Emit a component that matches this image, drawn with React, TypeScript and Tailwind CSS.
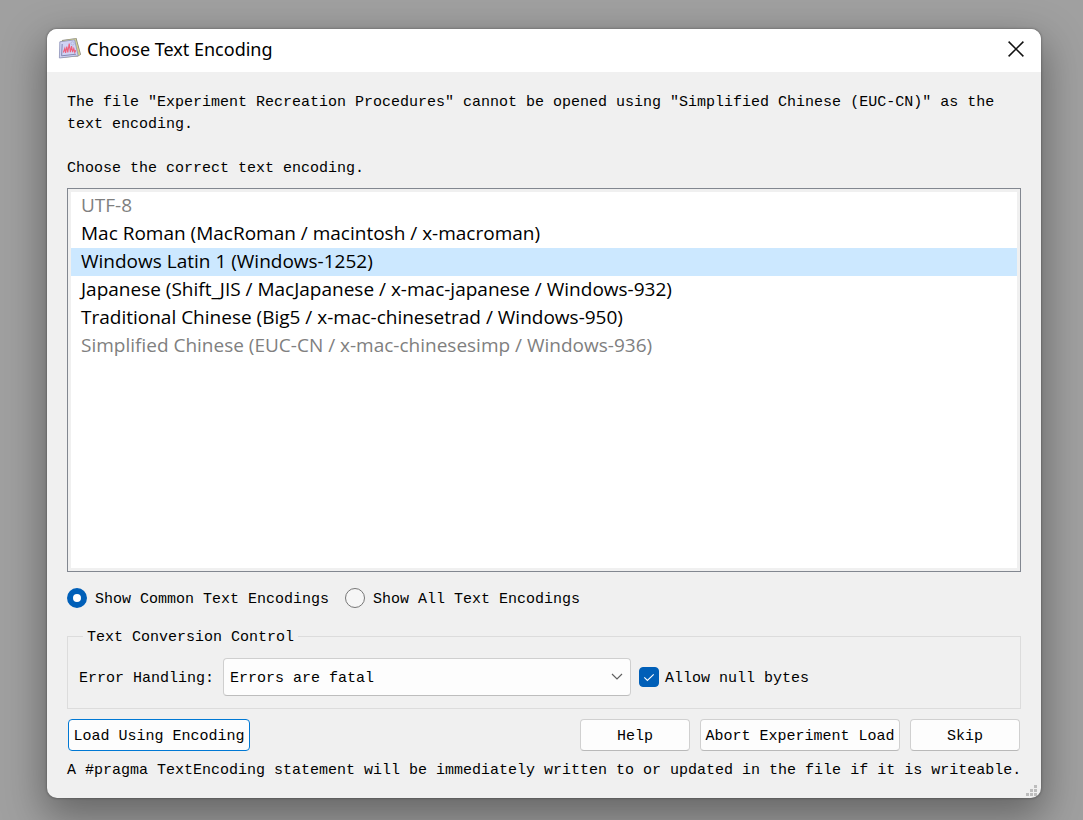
import { useState } from "react";

type Encoding = { name: string; disabled?: boolean };

const encodings: Encoding[] = [
  { name: "UTF-8", disabled: true },
  { name: "Mac Roman (MacRoman / macintosh / x-macroman)" },
  { name: "Windows Latin 1 (Windows-1252)" },
  { name: "Japanese (Shift_JIS / MacJapanese / x-mac-japanese / Windows-932)" },
  { name: "Traditional Chinese (Big5 / x-mac-chinesetrad / Windows-950)" },
  { name: "Simplified Chinese (EUC-CN / x-mac-chinesesimp / Windows-936)", disabled: true },
];

function AppIcon() {
  return (
    <svg width="24" height="24" viewBox="0 0 24 24" aria-hidden="true">
      <path d="M4 3 L18.5 1 L23 17.5 L20 19.5 L4 20.5 Z" fill="#85847c" />
      <path d="M2.5 4 L17.8 1.6 L22.3 17.5 L19 19.5 L3 21 Z" fill="#d2d08c" />
      <path d="M1.8 4.8 L16.6 2.8 L20.2 18.8 L1.4 21 Z" fill="#d0d3f4" stroke="#8b90b6" strokeWidth="0.8" />
      <path d="M4.2 7 L3.6 18.8 L18 17.2" stroke="#7980ac" strokeWidth="0.9" fill="none" />
      <circle cx="14.6" cy="6.4" r="1.7" fill="none" stroke="#a9aed8" strokeWidth="0.8" />
      <path
        d="M5.4 15.5 L6.8 11.5 L7.6 15.8 L8.8 9.5 L9.8 15.4 L11.2 6.5 L12.4 15.2 L13.6 9.2 L14.6 15.2 L15.8 11.4 L16.8 15.4 L17.8 13.2"
        fill="none"
        stroke="#ee5f7a"
        strokeWidth="1.1"
      />
    </svg>
  );
}

function Grip() {
  return (
    <svg className="absolute right-1 bottom-0.5" width="11" height="11" viewBox="0 0 11 11" fill="#bdbdbd" aria-hidden="true">
      <path d="M8 0h3v3h-3z M4 4h3v3h-3z M8 4h3v3h-3z M0 8h3v3h-3z M4 8h3v3h-3z M8 8h3v3h-3z" />
    </svg>
  );
}

function PushButton({ children, className }: { children: string; className: string }) {
  return (
    <button type="button" className={`h-8 rounded border bg-[#fdfdfd] pt-1 whitespace-nowrap ${className}`}>
      {children}
    </button>
  );
}

function Radio({ label, checked, onChange }: { label: string; checked: boolean; onChange: () => void }) {
  return (
    <label className="flex items-center gap-2">
      <input
        type="radio"
        name="encoding-scope"
        checked={checked}
        onChange={onChange}
        className="size-5 appearance-none rounded-full border border-[#767676] bg-[#f6f6f6] checked:border-[6px] checked:border-[#005fb8] checked:bg-white"
      />
      <span className="pt-1">{label}</span>
    </label>
  );
}

export default function App() {
  const [selected, setSelected] = useState(2);
  const [scope, setScope] = useState("common");

  return (
    <div className="flex min-h-screen bg-[#a0a0a0] pt-[29px] pr-[42px] pb-[22px] pl-[47px] font-['Liberation_Mono',monospace] text-[15px] leading-[22px] text-black">
      <div
        role="dialog"
        aria-labelledby="dialog-title"
        className="relative flex flex-1 flex-col rounded-[10px] bg-[#f0f0f0] shadow-[0_0_2px_1px_#00000030,0_16px_40px_4px_#0000005c]"
      >
        <header className="flex h-[43px] items-center gap-1 rounded-t-[10px] bg-white pr-[17px] pb-1 pl-[11px]">
          <AppIcon />
          <h1 id="dialog-title" className="flex-1 pl-px font-['Noto_Sans',sans-serif] text-[18px] leading-6">
            Choose Text Encoding
          </h1>
          <button type="button" aria-label="Close" className="flex size-4 items-center justify-center">
            <svg width="16" height="16" viewBox="0 0 16 16" fill="none" stroke="#111" strokeWidth="1.5" aria-hidden="true">
              <path d="M0.6 0.6 L15.4 15.4 M15.4 0.6 L0.6 15.4" />
            </svg>
          </button>
        </header>

        <main className="flex flex-1 flex-col px-5 pt-5 pb-4">
          <p>
            The file "Experiment Recreation Procedures" cannot be opened using "Simplified Chinese (EUC-CN)" as the text
            encoding.
          </p>
          <p id="list-label" className="mt-[22px]">
            Choose the correct text encoding.
          </p>

          <div className="mt-2 flex flex-1 border border-[#828790] p-[3px]">
            <ul
              role="listbox"
              aria-labelledby="list-label"
              className="flex-1 bg-white pb-6 font-['Open_Sans',sans-serif] text-[19px] leading-[26px]"
            >
              {encodings.map((encoding, index) => (
                <li
                  key={encoding.name}
                  role="option"
                  aria-selected={index === selected}
                  aria-disabled={encoding.disabled}
                  onClick={() => !encoding.disabled && setSelected(index)}
                  className="pb-0.5 pl-2.5 aria-disabled:text-[#808080] aria-selected:bg-[#cce8ff]"
                >
                  {encoding.name}
                </li>
              ))}
            </ul>
          </div>

          <div className="mt-[13px] flex gap-4">
            <Radio label="Show Common Text Encodings" checked={scope === "common"} onChange={() => setScope("common")} />
            <Radio label="Show All Text Encodings" checked={scope === "all"} onChange={() => setScope("all")} />
          </div>

          <fieldset className="mt-3 border border-[#dcdcdc] px-[11px] pt-[9px] pb-3">
            <legend className="ml-1 px-1 pt-1">Text Conversion Control</legend>
            <div className="flex items-center gap-2">
              <label htmlFor="error-handling" className="pt-1 pr-px">
                Error Handling:
              </label>
              <div className="relative flex w-[408px]">
                <select
                  id="error-handling"
                  className="h-[38px] w-full appearance-none rounded-sm border border-[#cfcfcf] border-b-[#bdbdbd] bg-[#fdfdfd] pt-1 pr-8 pl-1.5"
                >
                  <option>Errors are fatal</option>
                </select>
                <svg
                  className="pointer-events-none absolute top-[15px] right-2"
                  width="12"
                  height="8"
                  viewBox="0 0 12 8"
                  fill="none"
                  stroke="#606060"
                  strokeWidth="1.2"
                  aria-hidden="true"
                >
                  <path d="M1 1 L6 6 L11 1" />
                </svg>
              </div>
              <label className="flex items-center gap-1.5">
                <span className="grid size-5">
                  <input
                    type="checkbox"
                    defaultChecked
                    className="peer col-start-1 row-start-1 size-5 appearance-none rounded border border-[#767676] bg-[#f6f6f6] checked:border-[#005fb8] checked:bg-[#005fb8]"
                  />
                  <svg
                    className="pointer-events-none invisible col-start-1 row-start-1 peer-checked:visible"
                    width="20"
                    height="20"
                    viewBox="0 0 20 20"
                    fill="none"
                    stroke="#fff"
                    strokeWidth="1.1"
                    aria-hidden="true"
                  >
                    <path d="M5.3 10.3 L8.4 13.5 L14.7 7.3" />
                  </svg>
                </span>
                <span className="pt-1">Allow null bytes</span>
              </label>
            </div>
          </fieldset>

          <div className="mt-2.5 flex gap-2.5 px-px">
            <PushButton className="mr-auto w-[182px] border-[#0078d4]">Load Using Encoding</PushButton>
            <PushButton className="w-[110px] border-[#d0d0d0] border-b-[#b9b9b9]">Help</PushButton>
            <PushButton className="w-[200px] border-[#d0d0d0] border-b-[#b9b9b9]">Abort Experiment Load</PushButton>
            <PushButton className="w-[110px] border-[#d0d0d0] border-b-[#b9b9b9]">Skip</PushButton>
          </div>

          <p className="-mr-2 mt-[9px]">
            A #pragma TextEncoding statement will be immediately written to or updated in the file if it is writeable.
          </p>
        </main>
        <Grip />
      </div>
    </div>
  );
}
